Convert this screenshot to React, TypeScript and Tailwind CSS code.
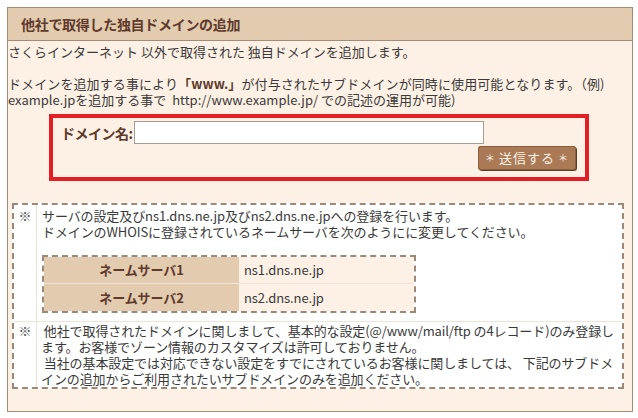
import React from "react";

const font = { fontFamily: '"Noto Sans CJK JP", "Noto Sans", sans-serif' };

export default function App() {
  return (
    <div className="w-[638px] h-[418px] bg-white pl-[7px] pt-[7px]" style={font}>
      <div className="w-[626px] h-[405px] border border-[#a38b77] bg-[#fdf1e5] flex flex-col">
        <div className="h-[33px] shrink-0 bg-[#e2cbae] border-b border-[#a38b77] flex items-center pl-[13px]">
          <span className="text-[14px] font-bold text-[#5e3a2c] tracking-[-0.3px]">他社で取得した独自ドメインの追加</span>
        </div>
        <div className="text-[13px] leading-[16px] text-[#3a3a3a]">
          <div className="mt-[3px] whitespace-nowrap">さくらインターネット 以外で取得された 独自ドメインを追加します。</div>
          <div className="mt-[16px] whitespace-nowrap tracking-[0.1px]">
            ドメインを追加する事により<span className="font-bold text-[#5e3a2c]">「www.」</span>が付与されたサブドメインが同時に使用可能となります。（例)
          </div>
          <div className="whitespace-nowrap">example.jpを追加する事で&nbsp; http://www.example.jp/ での記述の運用が可能)</div>

          <div className="mt-[6px] ml-[41px] w-[540px] h-[67px] border-[4px] border-[#e31e24] flex flex-col">
            <div className="flex items-center pt-[3px]">
              <span className="w-[81px] shrink-0 pl-[8px] text-[14px] font-bold text-[#5e3a2c] whitespace-nowrap tracking-[-0.5px]">ドメイン名:</span>
              <input className="w-[350px] h-[23px] border border-[#a89d94] bg-white outline-none" />
            </div>
            <div className="flex justify-end pr-[9px] mt-[2px]">
              <button className="w-[98px] h-[24px] rounded-[3px] bg-[#a97a55] text-[#fbf1e6] text-[13px] shadow-[1px_1px_0_#5e3d27,inset_0_0_0_1px_#8c5f3e] flex items-center justify-center tracking-[1px]">
                <span className="text-[10px] mr-[3px]">＊</span>送信する<span className="text-[10px] ml-[3px]">＊</span>
              </button>
            </div>
          </div>

          <div className="mt-[22px] ml-[4px] w-[612px] border-2 border-dashed border-[#9c8878] bg-white tracking-[-0.1px]">
            <div className="flex border-b border-[#efe3d8]">
              <div className="w-[23px] shrink-0 border-r border-[#efe3d8] text-center pt-[3px] text-[#555]">※</div>
              <div className="pl-[5px] pt-[3px] pb-[8px]">
                <div className="whitespace-nowrap">サーバの設定及びns1.dns.ne.jp及びns2.dns.ne.jpへの登録を行います。</div>
                <div className="whitespace-nowrap">ドメインのWHOISに登録されているネームサーバを次のようにに変更してください。</div>
                <div className="mt-[15px] w-[374px] border-2 border-dashed border-[#9c8878]">
                  <div className="flex h-[27px] border-b border-[#efe3d8]">
                    <div className="w-[195px] bg-[#e2cbae] flex items-center justify-center font-bold text-[#5e3a2c]">ネームサーバ1</div>
                    <div className="flex-1 bg-[#fdf1e6] flex items-center pl-[5px]">ns1.dns.ne.jp</div>
                  </div>
                  <div className="flex h-[27px]">
                    <div className="w-[195px] bg-[#e2cbae] flex items-center justify-center font-bold text-[#5e3a2c]">ネームサーバ2</div>
                    <div className="flex-1 bg-[#fdf1e6] flex items-center pl-[5px]">ns2.dns.ne.jp</div>
                  </div>
                </div>
              </div>
            </div>
            <div className="flex">
              <div className="w-[23px] shrink-0 border-r border-[#efe3d8] text-center pt-[1px] text-[#555]">※</div>
              <div className="pl-[4px] pt-[1px]">
                <div className="whitespace-nowrap">&nbsp;他社で取得されたドメインに関しまして、基本的な設定(@/www/mail/ftp の4レコード)のみ登録し</div>
                <div className="whitespace-nowrap">ます。お客様でゾーン情報のカスタマイズは許可しておりません。</div>
                <div className="whitespace-nowrap">&nbsp;当社の基本設定では対応できない設定をすでにされているお客様に関しましては、 下記のサブドメ</div>
                <div className="whitespace-nowrap">インの追加からご利用されたいサブドメインのみを追加ください。</div>
              </div>
            </div>
          </div>
        </div>
      </div>
    </div>
  );
}
